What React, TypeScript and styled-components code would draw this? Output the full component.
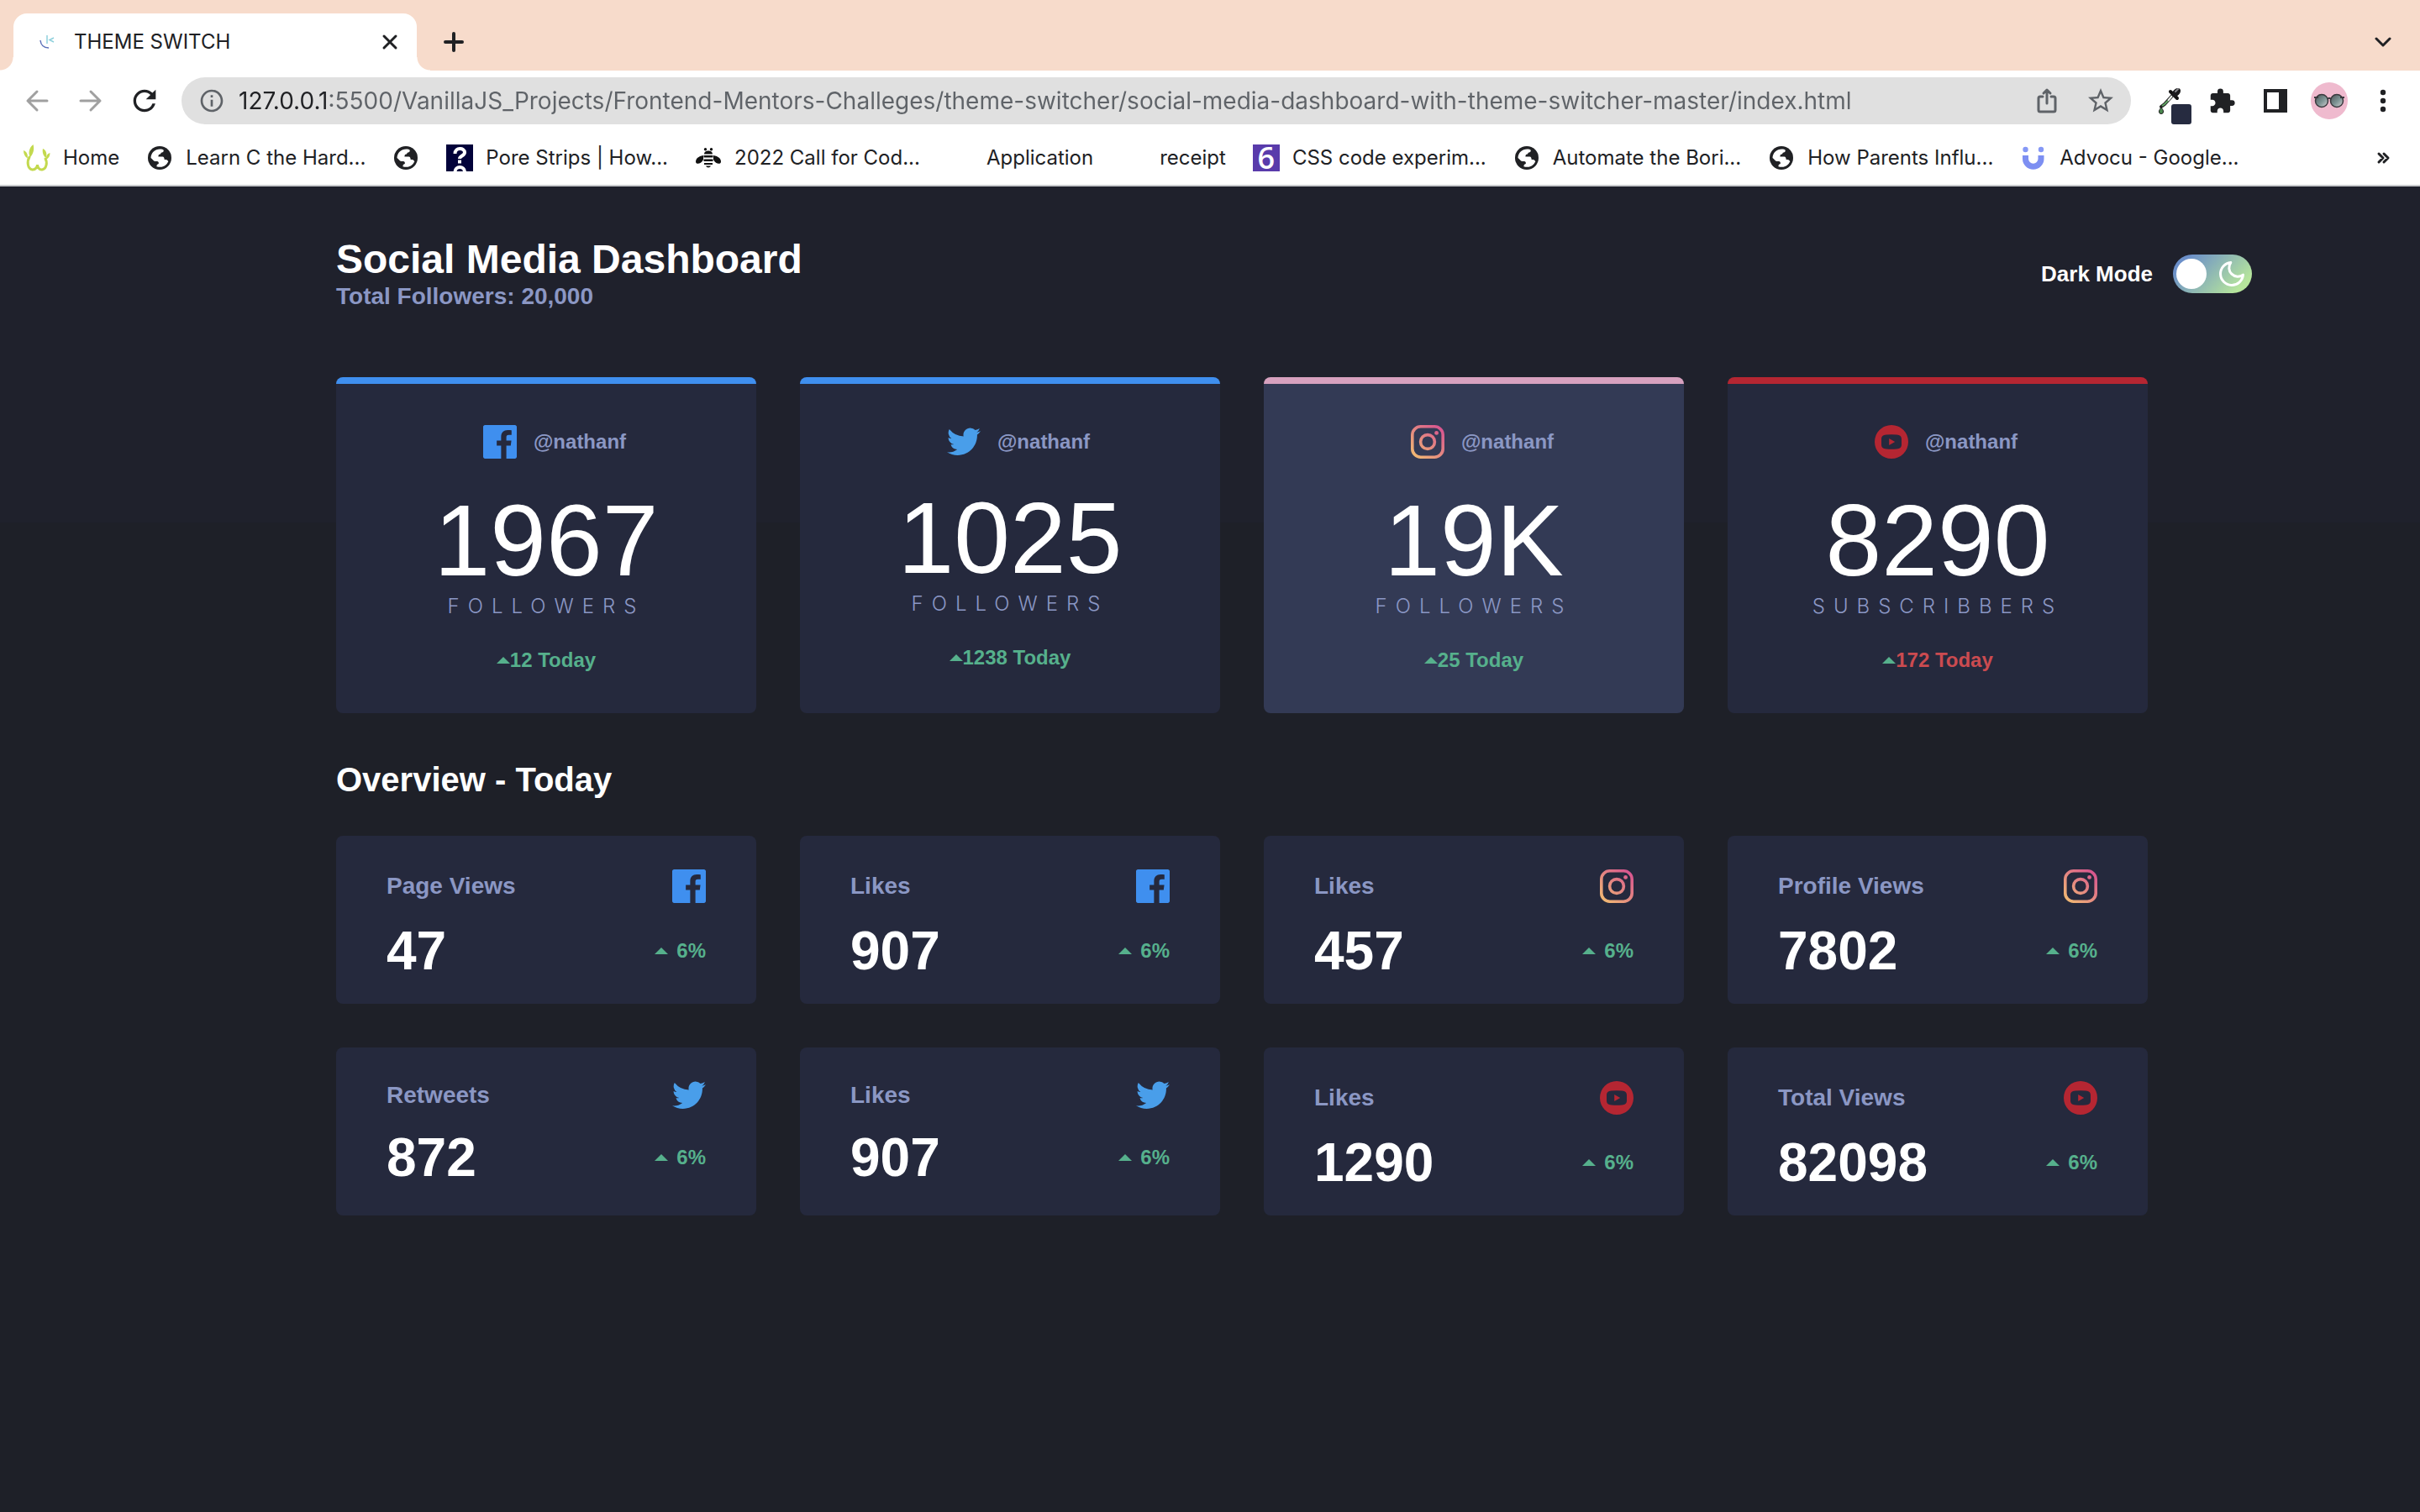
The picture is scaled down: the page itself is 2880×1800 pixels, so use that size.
import React, { useState } from "react";
import styled, { createGlobalStyle } from "styled-components";
import { MdExtension, MdInfoOutline, MdRefresh, MdStarBorder } from "react-icons/md";

const color = {
  frame: "#f7dbcb",
  ink: "#202124",
  grey: "#5f6368",
  bgTop: "#1f212c",
  bg: "#1e2028",
  card: "#25293d",
  cardActive: "#333a55",
  muted: "#8b97c4",
  up: "#56b08c",
  down: "#cb4b50",
  facebook: "#3f8fef",
  twitter: "#499eea",
  instagram: "#d7a1bf",
  youtube: "#b52632",
};

const uiFont = `Inter, Roboto, sans-serif`;
const pageFont = `"Liberation Sans", Helvetica, Arial, sans-serif`;

const GlobalStyle = createGlobalStyle`
  *, *::before, *::after { box-sizing: border-box; }
  body { margin: 0; background: ${color.bg}; }
  h1, h2, p, ul { margin: 0; padding: 0; }
  ul { list-style: none; }
  button { border: 0; padding: 0; background: none; font: inherit; color: inherit; cursor: pointer; }
  svg { display: block; flex: none; }
`;

/* ---------- Browser chrome ---------- */

const Window = styled.div`
  display: flex;
  flex-direction: column;
  min-height: 100vh;
`;

const Chrome = styled.header`
  background: #fff;
  border-bottom: 2px solid #c9cacd;
  font-family: ${uiFont};
  color: ${color.ink};
`;

const TabStrip = styled.div`
  display: flex;
  align-items: center;
  height: 84px;
  padding: 16px 12px 0 16px;
  background: ${color.frame};
`;

const Tab = styled.div`
  position: relative;
  display: flex;
  align-items: center;
  width: 480px;
  height: 68px;
  padding: 0 16px 0 24px;
  gap: 16px;
  border-radius: 16px 16px 0 0;
  background: #fff;

  &::before,
  &::after {
    content: "";
    position: absolute;
    bottom: 0;
    width: 16px;
    height: 16px;
  }
  &::before {
    right: 100%;
    background: radial-gradient(circle at 0 0, transparent 15px, #fff 16px);
  }
  &::after {
    left: 100%;
    background: radial-gradient(circle at 100% 0, transparent 15px, #fff 16px);
  }
`;

const TabTitle = styled.span`
  flex: 1;
  font-size: 24px;
  line-height: 32px;
  white-space: nowrap;
`;

const IconButton = styled.button<{ $w?: number; $tone?: string }>`
  display: flex;
  align-items: center;
  justify-content: center;
  flex: none;
  width: ${(p) => p.$w ?? 56}px;
  height: 56px;
  color: ${(p) => p.$tone ?? color.ink};
`;

const NewTab = styled(IconButton)`
  margin-left: 16px;
  margin-right: auto;
`;

const Toolbar = styled.div`
  display: flex;
  align-items: center;
  padding: 8px 12px 8px 16px;
`;

const NavButtons = styled.div`
  display: flex;
  gap: 8px;
  margin-right: 16px;
`;

const Omnibox = styled.div`
  display: flex;
  flex: 1;
  align-items: center;
  gap: 16px;
  height: 56px;
  padding: 0 12px 0 20px;
  border-radius: 28px;
  background: #e0e0e0;
  color: ${color.grey};
`;

/* The host part of the address is darker than the rest of it. */
const Address = styled.input`
  flex: 1;
  min-width: 0;
  height: 40px;
  border: 0;
  padding: 0;
  outline: none;
  font: 400 28px/40px ${uiFont};
  color: transparent;
  caret-color: ${color.ink};
  background: linear-gradient(90deg, ${color.ink} 109px, ${color.grey} 109px);
  background-clip: text;
  -webkit-background-clip: text;
`;

const Tools = styled.div`
  display: flex;
  margin-left: 12px;
`;

const BookmarkBar = styled.nav`
  display: flex;
  align-items: center;
  justify-content: space-between;
  height: 64px;
  padding: 0 16px 0 28px;
`;

const BookmarkList = styled.ul`
  display: flex;
  gap: 32px;
`;

const Bookmark = styled.a`
  display: flex;
  align-items: center;
  gap: 15px;
  height: 40px;
  font-size: 24px;
  line-height: 32px;
  white-space: nowrap;
  color: inherit;
  text-decoration: none;
`;

const IconSlot = styled.span`
  display: flex;
  align-items: center;
  justify-content: center;
  width: 32px;
  height: 32px;
`;

const SixTile = styled(IconSlot)`
  background: #593bab;
  color: #fff;
  font: 600 36px/32px "Open Sans", sans-serif;
`;

/* ---------- Dashboard ---------- */

const Page = styled.main`
  flex: 1;
  padding: 60px 200px 80px 400px;
  background: linear-gradient(${color.bgTop} 400px, ${color.bg} 400px);
  font-family: ${pageFont};
  font-weight: 700;
  color: #fff;
`;

const PageHeader = styled.div`
  display: flex;
  align-items: center;
  justify-content: space-between;
  margin-bottom: 79px;
`;

const Title = styled.h1`
  font-size: 48px;
  line-height: 54px;
`;

const Total = styled.p`
  font-size: 28px;
  line-height: 34px;
  color: ${color.muted};
`;

const ModeLabel = styled.label`
  display: flex;
  align-items: center;
  gap: 24px;
  font-size: 26px;
  line-height: 32px;
  cursor: pointer;
`;

const Track = styled.span`
  position: relative;
  display: flex;
  align-items: center;
  justify-content: space-between;
  width: 94px;
  height: 46px;
  padding: 0 6px 0 4px;
  border-radius: 23px;
  background: linear-gradient(135deg, #6b8fc9 15%, #b6e59c 85%);
`;

const Checkbox = styled.input`
  position: absolute;
  inset: 0;
  width: 100%;
  height: 100%;
  margin: 0;
  opacity: 0;
  cursor: pointer;
`;

const Knob = styled.span`
  width: 36px;
  height: 36px;
  border-radius: 50%;
  background: #fff;
`;

const Grid = styled.section`
  display: grid;
  grid-template-columns: repeat(4, 1fr);
  gap: 52px;
  margin-right: 124px;
`;

const StatCard = styled.article<{ $accent: string; $active?: boolean }>`
  display: flex;
  flex-direction: column;
  align-items: center;
  justify-content: center;
  padding: 49px 0;
  border-top: 8px solid transparent;
  border-radius: 8px;
  background: linear-gradient(${(p) => p.$accent} 0 0) border-box top / 100% 8px no-repeat,
    ${(p) => (p.$active ? color.cardActive : color.card)};
`;

const Account = styled.div`
  display: flex;
  align-items: center;
  gap: 20px;
  padding-left: 20px;
`;

const Handle = styled.span`
  font-size: 24px;
  line-height: 28px;
  color: ${color.muted};
`;

const BigNumber = styled.p`
  margin-top: 32px;
  font-size: 120px;
  font-weight: 400;
  line-height: 130px;
`;

const Unit = styled.p`
  font-family: ${uiFont};
  font-size: 24px;
  font-weight: 300;
  line-height: 28px;
  letter-spacing: 10px;
  text-transform: uppercase;
  color: ${color.muted};
`;

const Change = styled.p<{ $gap?: number; $down?: boolean }>`
  display: flex;
  align-items: center;
  gap: ${(p) => p.$gap ?? 0}px;
  font-size: 24px;
  line-height: 28px;
  color: ${(p) => (p.$down ? color.down : color.up)};
`;

const Today = styled(Change)`
  margin-top: 36px;
`;

const SectionTitle = styled.h2`
  padding: 55px 0 43px;
  font-size: 40px;
  line-height: 48px;
`;

const OverviewCard = styled.article`
  padding: 40px 60px 26px;
  border-radius: 8px;
  background: ${color.card};
`;

const Line = styled.div`
  display: flex;
  align-items: center;
  justify-content: space-between;

  & + & {
    margin-top: 20px;
  }
`;

const Metric = styled.span`
  font-size: 28px;
  line-height: 32px;
  color: ${color.muted};
`;

const Value = styled.span`
  font-size: 64px;
  line-height: 74px;
`;

/* ---------- Icons ---------- */

type Network = "facebook" | "twitter" | "instagram" | "youtube";

const NetworkIcon = ({ name }: { name: Network }) => {
  if (name === "twitter")
    return (
      <svg width="40" height="34" viewBox="0 0 20 17" role="img" aria-label="Twitter">
        <path fill={color.twitter} d="M20 2.172a8.192 8.192 0 01-2.357.646 4.11 4.11 0 001.804-2.27 8.22 8.22 0 01-2.605.996A4.096 4.096 0 0013.847.248c-2.65 0-4.596 2.472-3.998 5.037A11.648 11.648 0 011.392.998a4.109 4.109 0 001.27 5.478 4.086 4.086 0 01-1.858-.513c-.045 1.9 1.318 3.679 3.291 4.075a4.113 4.113 0 01-1.853.07 4.106 4.106 0 003.833 2.849A8.25 8.25 0 010 14.658a11.616 11.616 0 006.29 1.843c7.618 0 11.922-6.434 11.662-12.205A8.354 8.354 0 0020 2.172z" />
      </svg>
    );
  if (name === "instagram")
    return (
      <svg width="40" height="40" viewBox="0 0 20 20" role="img" aria-label="Instagram">
        <defs>
          <linearGradient id="ig" gradientUnits="userSpaceOnUse" x1="2" y1="20" x2="18" y2="2">
            <stop offset="0" stopColor="#f2bd72" />
            <stop offset="1" stopColor="#d8568f" />
          </linearGradient>
        </defs>
        <rect x=".9" y=".9" width="18.2" height="18.2" rx="5" fill="none" stroke="url(#ig)" strokeWidth="1.8" />
        <circle cx="10" cy="10" r="4.2" fill="none" stroke="url(#ig)" strokeWidth="1.8" />
        <circle cx="15.3" cy="4.7" r="1.2" fill="url(#ig)" />
      </svg>
    );
  if (name === "youtube")
    return (
      <svg width="40" height="40" viewBox="0 0 20 20" role="img" aria-label="YouTube">
        <path
          fill={color.youtube}
          fillRule="evenodd"
          d="M10 0a10 10 0 100 20 10 10 0 000-20zM6.9 5.8Q10 5.55 13.1 5.8C15.2 5.9 15.9 6.8 16 8.4v3.2c-.1 1.6-.8 2.5-2.9 2.6q-3.1.25-6.2 0C4.8 14.1 4.1 13.2 4 11.6V8.4c.1-1.6.8-2.5 2.9-2.6zM8.6 8v4L12.1 10z"
        />
      </svg>
    );
  return (
    <svg width="40" height="40" viewBox="0 0 20 20" role="img" aria-label="Facebook">
      <path fill={color.facebook} d="M18.896 0H1.104C.494 0 0 .494 0 1.104v17.793C0 19.506.494 20 1.104 20h9.58v-7.745H8.076V9.237h2.606V7.01c0-2.583 1.578-3.99 3.883-3.99 1.104 0 2.052.082 2.329.119v2.7h-1.598c-1.254 0-1.496.597-1.496 1.47v1.928h2.989l-.39 3.018h-2.6V20h5.098c.608 0 1.102-.494 1.102-1.104V1.104C20 .494 19.506 0 18.896 0z" />
    </svg>
  );
};

const UpArrow = () => (
  <svg width="16" height="8" viewBox="0 0 16 8" aria-hidden="true">
    <path d="M0 8 8 0l8 8z" fill={color.up} />
  </svg>
);

const MoonIcon = () => (
  <svg width="36" height="36" viewBox="0 0 24 24" fill="none" stroke="#fff" strokeWidth="2" strokeLinejoin="round" aria-hidden="true">
    <path d="M21 12.79A9 9 0 1 1 11.21 3 7 7 0 0 0 21 12.79z" />
  </svg>
);

const Favicon = () => (
  <svg width="18" height="18" viewBox="0 0 18 18" fill="none" strokeWidth="1.5" aria-hidden="true">
    <path d="M1 7c.5 5 4 9 10 9" stroke="#5b6fb8" />
    <path d="M9 1v10" stroke="#8fd0dc" />
    <path d="m17 4-5 2.5 5 2.5" stroke="#8fd0dc" />
  </svg>
);

const Stroke = ({ d, size, width }: { d: string; size: number; width: number }) => (
  <svg width={size} height={size} viewBox={`0 0 ${size} ${size}`} fill="none" stroke="currentColor" strokeWidth={width} strokeLinecap="round" strokeLinejoin="round" aria-hidden="true">
    <path d={d} />
  </svg>
);

const Dropper = () => (
  <svg width="56" height="56" viewBox="0 0 56 56" aria-hidden="true">
    <path d="M34 21 24 32l-4 3" fill="none" stroke="#222" strokeWidth="4" strokeLinecap="round" />
    <path d="M33 22 28 28" stroke="#eef3ee" strokeWidth="2" />
    <path d="M28 28 24 32l-3 2" stroke="#62a565" strokeWidth="2" fill="none" />
    <path d="m31 17 8 8" stroke="#111" strokeWidth="4" strokeLinecap="round" />
    <ellipse cx="38" cy="18" rx="6" ry="4" transform="rotate(-45 38 18)" fill="#1a1a1c" />
    <path d="M37 17 40 14" stroke="#85858a" strokeWidth="2" strokeLinecap="round" />
    <path d="M20 36c-2 2.5-2.5 3.5-2.5 5a2.5 2.5 0 0 0 5 0c0-1.5-.5-2.5-2.5-5z" fill="#4c8a50" stroke="#1c1c1c" strokeWidth="1" />
    <rect x="32" y="32" width="24" height="24" rx="3" fill="#262b40" />
  </svg>
);

const SidePanel = () => (
  <svg width="28" height="28" viewBox="0 0 28 28" aria-hidden="true">
    <path fill="currentColor" fillRule="evenodd" d="M0 0h28v28H0zM4 4v20h14V4z" />
  </svg>
);

const Avatar = () => (
  <svg width="44" height="44" viewBox="0 0 44 44" aria-hidden="true">
    <defs>
      <linearGradient id="lens" x1="0" y1="0" x2="1" y2="1">
        <stop offset="0" stopColor="#4b5357" />
        <stop offset=".55" stopColor="#7f9696" />
        <stop offset="1" stopColor="#d8d3d6" />
      </linearGradient>
    </defs>
    <circle cx="22" cy="22" r="22" fill="#efbace" />
    <g stroke="#3a3a3e" strokeWidth="1.5">
      <circle cx="13" cy="22" r="7.5" fill="url(#lens)" />
      <circle cx="31" cy="22" r="7.5" fill="url(#lens)" />
      <path d="M4 18h5M35 18h5M20 20q2-2.5 4 0" fill="none" strokeWidth="2" />
    </g>
  </svg>
);

const Dots = () => (
  <svg width="8" height="28" viewBox="0 0 8 28" fill="currentColor" aria-hidden="true">
    <circle cx="4" cy="4" r="3.2" />
    <circle cx="4" cy="14" r="3.2" />
    <circle cx="4" cy="24" r="3.2" />
  </svg>
);

const Globe = () => (
  <svg width="28" height="28" viewBox="0 0 28 28" aria-hidden="true">
    <circle cx="14" cy="14" r="14" fill={color.ink} />
    <path fill="#fff" d="M3.5 14C3.5 8 8.5 3.4 14.5 3.4c1.5 0 4 .4 4.3 1.6 0 2-1.3 2.6-3 2.8-.5 1.7-1.3 2-2.8 2.2-.2 1-.8 1.8-.5 2.4h5c1.5.2 2 1.3 2.2 3.6h1.8c.9 0 2 .8 2.8 2.2C22.5 22 19 24.8 15 24.8c-1.6 0-3.6-.2-4.6-.6 0-1.9.8-2.7 2.4-3.2.3-1.6-.2-3-2-3H8.3c-1.6 0-2.6-2.6-4.8-4z" />
  </svg>
);

const Sprout = () => (
  <svg width="32" height="32" viewBox="0 0 32 32" aria-hidden="true">
    <path
      fill="#c3d94e"
      d="M11.5 0c1.5 5 .5 11-3.5 15C5 10 7 3.500 11.5 0zM0 7c4 1.5 5.500 5 4.700 9.500C1.500 14.500 0 11 0 7zM23 5c4 2 5.500 6 3.500 11-3-2.500-4.500-7-3.500-11zM31.500 10c-3 1-5 3.500-4.500 8 3-1.500 4.500-4.500 4.500-8z"
    />
    <path d="M7 15c-3 5-2.500 14 3.500 15 4 .3 6-3.500 6-6 0 2.500 2 6.300 5.500 6 5.500-1 6.500-9 4-13" fill="none" stroke="#c3d94e" strokeWidth="3" strokeLinecap="round" />
  </svg>
);

const QuestionTile = () => (
  <svg width="32" height="32" viewBox="0 0 32 32" aria-hidden="true">
    <rect width="32" height="32" fill="#02023a" />
    <g fill="none" stroke="#fff" strokeWidth="4">
      <path d="M10.5 11c0-8 11.5-7.5 11.5-1.5 0 4-6 4-6 7.5" />
      <path d="M16 18.5v4" />
      <path d="M10.5 33c0-8 11.5-8 11.5 0" />
    </g>
  </svg>
);

const Bee = () => (
  <svg width="30" height="24" viewBox="0 0 30 24" aria-hidden="true">
    <g fill="#111">
      <circle cx="11.5" cy="1.8" r="1.7" />
      <circle cx="18.5" cy="1.8" r="1.7" />
      <path d="M10 7.5C10 2 20 2 20 7.5zM9.5 9h11v2.500h-11zM9.500 13.500h11V16h-11zM10 18h10v2H10zM12 21.500h6c-1 2.500-5 2.500-6 0z" />
      <path d="M9 9C3 10 0 13 0 16.500S6 20 9 14zM21 9c6 1 9 4 9 7.500S24 20 21 14z" />
    </g>
  </svg>
);

const Magnet = () => (
  <svg width="28" height="28" viewBox="0 0 28 28" aria-hidden="true">
    <circle cx="4.5" cy="4" r="3.2" fill="#8598f6" />
    <circle cx="23" cy="4" r="3.2" fill="#8598f6" />
    <path d="M4.500 11v4a9.250 9.250 0 0 0 18.500 0V11" fill="none" stroke="#7d8ff2" strokeWidth="7" />
  </svg>
);

/* ---------- Data ---------- */

const bookmarks: { label?: string; icon: React.ReactNode }[] = [
  { label: "Home", icon: <IconSlot><Sprout /></IconSlot> },
  { label: "Learn C the Hard...", icon: <IconSlot><Globe /></IconSlot> },
  { icon: <IconSlot><Globe /></IconSlot> },
  { label: "Pore Strips | How...", icon: <IconSlot><QuestionTile /></IconSlot> },
  { label: "2022 Call for Cod...", icon: <IconSlot><Bee /></IconSlot> },
  { label: "Application", icon: <IconSlot /> },
  { label: "receipt", icon: <IconSlot /> },
  { label: "CSS code experim...", icon: <SixTile aria-hidden="true">6</SixTile> },
  { label: "Automate the Bori...", icon: <IconSlot><Globe /></IconSlot> },
  { label: "How Parents Influ...", icon: <IconSlot><Globe /></IconSlot> },
  { label: "Advocu - Google...", icon: <IconSlot><Magnet /></IconSlot> },
];

const stats: { network: Network; count: string; unit: string; today: string; down?: boolean; active?: boolean }[] = [
  { network: "facebook", count: "1967", unit: "Followers", today: "12 Today" },
  { network: "twitter", count: "1025", unit: "Followers", today: "1238 Today" },
  { network: "instagram", count: "19K", unit: "Followers", today: "25 Today", active: true },
  { network: "youtube", count: "8290", unit: "Subscribbers", today: "172 Today", down: true },
];

const accents: Record<Network, string> = {
  facebook: color.facebook,
  twitter: color.facebook,
  instagram: color.instagram,
  youtube: color.youtube,
};

const overview: [string, Network, string][] = [
  ["Page Views", "facebook", "47"],
  ["Likes", "facebook", "907"],
  ["Likes", "instagram", "457"],
  ["Profile Views", "instagram", "7802"],
  ["Retweets", "twitter", "872"],
  ["Likes", "twitter", "907"],
  ["Likes", "youtube", "1290"],
  ["Total Views", "youtube", "82098"],
];

/* ---------- App ---------- */

const BrowserChrome = () => (
  <Chrome>
    <TabStrip>
      <Tab>
        <IconSlot><Favicon /></IconSlot>
        <TabTitle>THEME SWITCH</TabTitle>
        <IconButton $w={32} aria-label="Close tab">
          <Stroke size={20} width={3} d="M3 3l14 14M17 3 3 17" />
        </IconButton>
      </Tab>
      <NewTab aria-label="New tab">
        <Stroke size={26} width={4} d="M13 3v20M3 13h20" />
      </NewTab>
      <IconButton $w={64} aria-label="Search tabs">
        <Stroke size={20} width={3} d="M2 6l8 8 8-8" />
      </IconButton>
    </TabStrip>
    <Toolbar>
      <NavButtons>
        <IconButton aria-label="Back" $tone="#a0a0a0">
          <Stroke size={28} width={3} d="M26 14H3M14 3 3 14l11 11" />
        </IconButton>
        <IconButton aria-label="Forward" $tone="#a0a0a0">
          <Stroke size={28} width={3} d="M2 14h23M14 3l11 11-11 11" />
        </IconButton>
        <IconButton aria-label="Reload"><MdRefresh size={40} /></IconButton>
      </NavButtons>
      <Omnibox>
        <MdInfoOutline size={32} />
        <Address
          aria-label="Address"
          spellCheck={false}
          defaultValue="127.0.0.1:5500/VanillaJS_Projects/Frontend-Mentors-Challeges/theme-switcher/social-media-dashboard-with-theme-switcher-master/index.html"
        />
        <IconButton $w={48} $tone={color.grey} aria-label="Share">
          <Stroke size={32} width={3} d="M11 11H8a2 2 0 0 0-2 2v14a2 2 0 0 0 2 2h16a2 2 0 0 0 2-2V13a2 2 0 0 0-2-2h-3M16 19V3M12 7l4-4 4 4" />
        </IconButton>
        <IconButton $w={48} $tone={color.grey} aria-label="Bookmark this page"><MdStarBorder size={36} /></IconButton>
      </Omnibox>
      <Tools>
        <IconButton $w={64} aria-label="Colour picker"><Dropper /></IconButton>
        <IconButton $w={64} aria-label="Extensions"><MdExtension size={33} /></IconButton>
        <IconButton $w={64} aria-label="Side panel"><SidePanel /></IconButton>
        <IconButton $w={64} aria-label="Profile"><Avatar /></IconButton>
        <IconButton $w={64} aria-label="Menu"><Dots /></IconButton>
      </Tools>
    </Toolbar>
    <BookmarkBar aria-label="Bookmarks">
      <BookmarkList>
        {bookmarks.map((b, i) => (
          <li key={i}>
            <Bookmark href="#" aria-label={b.label ?? "Website"}>
              {b.icon}
              {b.label}
            </Bookmark>
          </li>
        ))}
      </BookmarkList>
      <IconButton aria-label="More bookmarks">
        <Stroke size={20} width={3} d="M5 5l5 5-5 5M11 5l5 5-5 5" />
      </IconButton>
    </BookmarkBar>
  </Chrome>
);

export default function App() {
  const [dark, setDark] = useState(true);
  return (
    <Window>
      <GlobalStyle />
      <BrowserChrome />
      <Page>
        <PageHeader>
          <div>
            <Title>Social Media Dashboard</Title>
            <Total>Total Followers: 20,000</Total>
          </div>
          <ModeLabel htmlFor="mode">
            Dark Mode
            <Track>
              <Knob />
              <MoonIcon />
              <Checkbox id="mode" type="checkbox" checked={dark} onChange={() => setDark(!dark)} />
            </Track>
          </ModeLabel>
        </PageHeader>

        <Grid>
          {stats.map((s) => (
            <StatCard key={s.network} $accent={accents[s.network]} $active={s.active}>
              <Account>
                <NetworkIcon name={s.network} />
                <Handle>@nathanf</Handle>
              </Account>
              <BigNumber>{s.count}</BigNumber>
              <Unit>{s.unit}</Unit>
              <Today $down={s.down}>
                <UpArrow />
                {s.today}
              </Today>
            </StatCard>
          ))}
        </Grid>

        <SectionTitle>Overview - Today</SectionTitle>

        <Grid>
          {overview.map(([label, network, value], i) => (
            <OverviewCard key={i}>
              <Line>
                <Metric>{label}</Metric>
                <NetworkIcon name={network} />
              </Line>
              <Line>
                <Value>{value}</Value>
                <Change $gap={10}>
                  <UpArrow />
                  6%
                </Change>
              </Line>
            </OverviewCard>
          ))}
        </Grid>
      </Page>
    </Window>
  );
}
